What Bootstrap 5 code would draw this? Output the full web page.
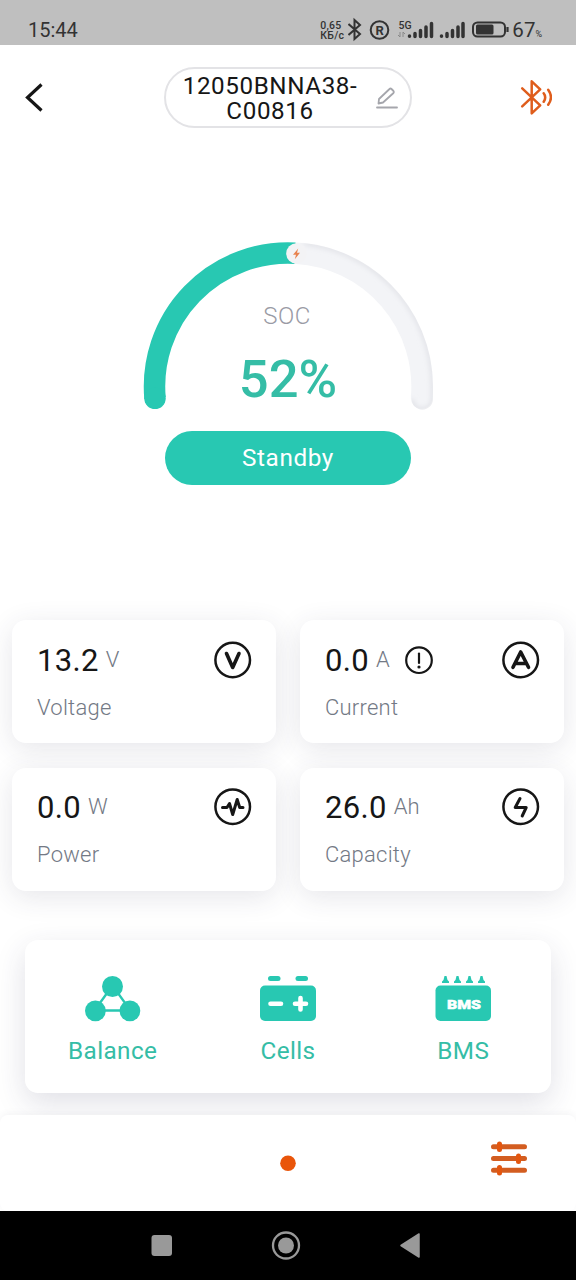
<!DOCTYPE html>
<html lang="en">
<head>
<meta charset="utf-8">
<meta name="viewport" content="width=device-width, initial-scale=1">
<title>Battery monitor</title>
<link href="https://cdn.jsdelivr.net/npm/bootstrap@5.3.0/dist/css/bootstrap.min.css" rel="stylesheet">
<style>
  :root { --teal: #28c8b2; --teal-text: #35bda6; --orange: #e3560f; --ink: #161616; }
  body { font-family: Roboto, sans-serif; color: var(--ink); background: #fff; letter-spacing: .5px; line-height: 1; }
  svg { display: block; flex: none; }
  .screen { width: 576px; height: 1280px; }
  .status { height: 45px; background: #bfbfbf; color: #333; padding: 15px 34px 0 28px; letter-spacing: 0; }
  .clock { font-size: 20px; line-height: 30px; letter-spacing: 0; }
  .rate { font-size: 10.5px; line-height: 10px; font-weight: 500; margin: 6px 5px 0 0; width: 23px; white-space: nowrap; letter-spacing: .2px; }
  .percent { font-size: 20.5px; line-height: 30px; margin-left: 2px; }
  .percent small { font-size: 9px; }
  .top { height: 105px; padding: 0 24px; }
  .device { width: 248px; height: 61px; border: 2px solid #e3e3e6; border-radius: 31px; padding: 0 12px 0 14px; }
  .device-name { font-size: 24.2px; line-height: 25px; width: 180px; margin-top: 2px; letter-spacing: .6px; }
  .gauge { height: 470px; padding-top: 80px; }
  .dial { width: 310px; height: 186px; }
  .dial-text { inset: 0; padding-top: 74px; }
  .soc { font-size: 24px; font-weight: 300; color: #9a9ba5; margin-right: 2px; }
  .level { font-size: 52.5px; font-weight: 500; color: var(--teal-text); margin-top: 25px; letter-spacing: 0; }
  .standby { width: 246px; height: 54px; margin-top: 15px; background: var(--teal); color: #fff; font-size: 24.3px; letter-spacing: .6px; }
  .stats { padding: 0 12px; row-gap: 24.5px; column-gap: 24px; display: grid; grid-template-columns: 1fr 1fr; }
  .stat { height: 123px; border-radius: 14px; background: #fff; padding: 21px 24px 0 25px; box-shadow: 0 6px 28px rgba(50,50,85,.12); }
  .stat-low { padding-top: 20.5px; }
  .stat-head { height: 38px; }
  .val { font-size: 31px; letter-spacing: .3px; }
  .unit { font-size: 22px; font-weight: 300; color: #737985; margin-left: 7px; letter-spacing: 0; }
  .stat-label { font-size: 22px; font-weight: 300; color: #737985; margin-top: 18px; letter-spacing: .25px; }
  .stat-low .stat-label { margin-top: 17.5px; }
  .tools { margin: 49.5px 25px 0; height: 153px; border-radius: 13px; background: #fff; padding-top: 36px; box-shadow: 0 10px 30px rgba(50,50,85,.15); }
  .tool { color: var(--teal-text); font-size: 24.3px; gap: 17px; width: 175.5px; letter-spacing: .4px; }
  .dock { position: relative; margin-top: 22px; height: 96px; background: #fff; border-radius: 8px; box-shadow: 0 -2px 6px rgba(50,50,85,.05); }
  .system { height: 69px; background: #000; position: relative; }
</style>
</head>
<body>
<main class="screen overflow-hidden d-flex flex-column">
  <header class="status d-flex justify-content-between">
    <span class="clock">15:44</span>
    <div class="d-flex">
      <div class="rate">0,65<br>КБ/с</div>
      <svg width="162" height="30" viewBox="347 15 162 30" fill="none" stroke="#333" stroke-width="2">
        <path d="M347.500 24L359 34L353.500 39V20L359 25L347.500 35"/>
        <circle cx="378.500" cy="30" r="8.800"/>
        <text x="378.600" y="34.600" text-anchor="middle" font-size="13" font-weight="700" fill="#333" stroke="none">R</text>
        <text x="397.500" y="28.500" font-size="10.500" font-weight="500" fill="#333" stroke="none">5G</text>
        <path d="M399 32v5m-2-2l2 2M402 37v-5l2 2" stroke="#888" stroke-width="1"/>
        <g stroke-width="3.500" stroke-linecap="round"><path d="M408.500 36v.2M414 33.500v3M419.500 30.500v6M425 27v9.500M430.500 23.500v13M440.500 36v.2M446 33.500v3M451.500 30.500v6M457 27v9.500M462 23.500v13"/></g>
        <rect x="472" y="22.500" width="32" height="14" rx="4.500"/>
        <rect x="475" y="24.500" width="17.500" height="10" rx="1.500" fill="#333" stroke="none"/>
        <path d="M506.500 27v5" stroke-width="2.200"/>
      </svg>
      <div class="percent text-nowrap">67<small>%</small></div>
    </div>
  </header>

  <nav class="top d-flex align-items-center justify-content-between">
    <svg width="32" height="32" viewBox="0 0 32 32" fill="none" stroke="#161616" stroke-width="3.200"><path d="M17.500 2.500L3.500 15.500L17.500 28.500"/></svg>
    <div class="device d-flex align-items-center justify-content-between">
      <div class="device-name text-center">12050BNNA38-<br>C00816</div>
      <svg width="22" height="24" viewBox="0 0 22 24" fill="none" stroke="#a5a6ac" stroke-width="1.800" stroke-linejoin="round" stroke-linecap="round"><path d="M2.500 17.500L3 13L13.500 3Q14.500 2 15.500 3L17.500 5Q18.300 6 17.500 7L7 16.500Z"/><path d="M1 21.500h20"/></svg>
    </div>
    <svg width="32" height="36" viewBox="520.300 79.700 32 36" fill="none" stroke="#df5d1c" stroke-width="2.500" stroke-linejoin="round" stroke-linecap="round"><path d="M522.500 88L540.500 105L532 113V81L540.500 89L522.500 106"/><path d="M544 93q3 4 0 8.500M548.500 89.500q5.500 7.500 0 15"/></svg>
  </nav>

  <section class="gauge d-flex flex-column align-items-center">
    <div class="dial position-relative">
      <svg width="310" height="186" viewBox="133 230 310 186" fill="none">
        <defs><filter id="soft" x="-10%" y="-10%" width="120%" height="120%"><feGaussianBlur stdDeviation="2.500"/></filter>
        <clipPath id="track"><path d="M144 403V386.500a144.500 144.500 0 0 1 289 0V399a10.700 10.700 0 0 1-21.400 0V386.500a123 123 0 0 0-246.100 0V403Z"/></clipPath></defs>
        <path d="M296.500 253.300A133.500 133.500 0 0 1 421.600 398" stroke="#f3f4f7" stroke-width="21.500" stroke-linecap="round"/>
        <g clip-path="url(#track)"><path d="M304 242.900A144.500 144.500 0 0 1 433 386.500V399a10.700 10.700 0 0 1-21.400 0" stroke="#e0e1e6" stroke-width="4" filter="url(#soft)"/></g>
        <path d="M155 398A133.500 133.500 0 0 1 295 253.200" stroke="#28c8b2" stroke-width="21.500"/>
        <circle cx="155" cy="398.300" r="10.750" fill="#28c8b2"/>
        <circle cx="296.500" cy="253.500" r="10.300" fill="#f3f3f5"/>
        <path d="M298.200 248.500L293 254.800H296L294.800 259.200L300 252.800H297Z" fill="#e8834f"/>
      </svg>
      <div class="dial-text position-absolute d-flex flex-column align-items-center">
        <div class="soc">SOC</div>
        <div class="level">52%</div>
      </div>
    </div>
    <div class="standby rounded-pill d-flex align-items-center justify-content-center">Standby</div>
  </section>

  <section class="stats">
    <div class="stat">
      <div class="stat-head d-flex align-items-center"><span class="val">13.2</span><span class="unit">V</span>
        <svg class="ms-auto" width="38" height="38" viewBox="0 0 38 38" fill="none" stroke="#161616" stroke-linecap="round" stroke-linejoin="round"><circle cx="18.700" cy="19" r="17.300" stroke-width="2.500"/><path d="M12.500 12.500L18.700 26.500L25 12.500" stroke-width="3.600"/></svg></div>
      <div class="stat-label">Voltage</div>
    </div>
    <div class="stat">
      <div class="stat-head d-flex align-items-center"><span class="val">0.0</span><span class="unit">A</span>
        <svg style="margin-left:15px" width="29" height="29" viewBox="0 0 29 29" fill="none" stroke="#161616" stroke-linecap="round"><circle cx="14" cy="14.200" r="12.800" stroke-width="2.200"/><path d="M14 7.500v9.500" stroke-width="2.200"/><circle cx="14" cy="21" r="1.600" fill="#161616" stroke="none"/></svg>
        <svg class="ms-auto" width="38" height="38" viewBox="0 0 38 38" fill="none" stroke="#161616" stroke-linecap="round" stroke-linejoin="round"><circle cx="18.700" cy="19" r="17.300" stroke-width="2.500"/><path d="M11 26.300L18.700 11L26.500 26.300M14 22.500h10" stroke-width="3.600"/></svg></div>
      <div class="stat-label">Current</div>
    </div>
    <div class="stat stat-low">
      <div class="stat-head d-flex align-items-center"><span class="val">0.0</span><span class="unit">W</span>
        <svg class="ms-auto" width="38" height="38" viewBox="0 0 38 38" fill="none" stroke="#161616" stroke-linecap="round" stroke-linejoin="round"><circle cx="18.700" cy="18.700" r="17.300" stroke-width="2.500"/><path d="M8.500 19.500H13L15.500 15.500L18.700 26.500L23.200 11.500L25.700 19.500H29" stroke-width="3"/></svg></div>
      <div class="stat-label">Power</div>
    </div>
    <div class="stat stat-low">
      <div class="stat-head d-flex align-items-center"><span class="val">26.0</span><span class="unit">Ah</span>
        <svg class="ms-auto" width="38" height="38" viewBox="0 0 38 38" fill="none" stroke="#161616" stroke-linecap="round" stroke-linejoin="round"><circle cx="18.700" cy="18.700" r="17.300" stroke-width="2.500"/><path d="M18 10.500L13.200 19.500H24.200L20.200 28" stroke-width="3"/></svg></div>
      <div class="stat-label">Capacity</div>
    </div>
  </section>

  <section class="tools d-flex">
    <div class="tool d-flex flex-column align-items-center">
      <svg width="56" height="46" viewBox="0.500 0.500 56 46" fill="#28c8b2"><path d="M28 10L10 35H46Z" fill="none" stroke="#28c8b2" stroke-width="2.400"/><circle cx="28" cy="11" r="10.500"/><circle cx="10.900" cy="35.300" r="10.400"/><circle cx="45.400" cy="35.300" r="10.400"/></svg>
      <span>Balance</span>
    </div>
    <div class="tool d-flex flex-column align-items-center">
      <svg width="56" height="46" viewBox="0 0.500 56 46" fill="#28c8b2"><rect x="8" y="0.500" width="12.500" height="5" rx="2.500"/><rect x="35.500" y="0.500" width="12.500" height="5" rx="2.500"/><rect y="10" width="56" height="35.500" rx="5"/><path d="M10.500 28.200H21M35 28.200H46M40.500 22.500V34" stroke="#fff" stroke-width="4.600" stroke-linecap="round"/></svg>
      <span>Cells</span>
    </div>
    <div class="tool d-flex flex-column align-items-center">
      <svg width="56" height="46" viewBox="-0.500 0.500 56 46" fill="#28c8b2"><path d="M9 0.500h2l1 4 1.500 1.500v1.500h-7V6L8 4.500ZM21 0.500h2l1 4 1.500 1.500v1.500h-7V6L20 4.500ZM33 0.500h2l1 4 1.500 1.500v1.500h-7V6L32 4.500ZM45 0.500h2l1 4 1.500 1.500v1.500h-7V6L44 4.500Z"/><rect y="10" width="55.500" height="35.500" rx="5"/><text x="28.500" y="33" text-anchor="middle" textLength="34" lengthAdjust="spacingAndGlyphs" font-size="13.500" font-weight="900" letter-spacing="0" fill="#fff" stroke="#fff" stroke-width=".5">BMS</text></svg>
      <span>BMS</span>
    </div>
  </section>

  <section class="dock">
    <svg width="576" height="96" viewBox="0 1115 576 96" fill="none" stroke="#e3560f" stroke-linecap="round"><circle cx="288" cy="1163.200" r="7.800" fill="#e9550a" stroke="none"/><path d="M493.500 1146.800H524.500M493.500 1158.500H524.500M493.500 1170.300H524.500" stroke="#d35d20" stroke-width="5"/><path d="M499.500 1144v5.500M518.500 1156v5.500M499.500 1167.500v5.500" stroke-width="5"/></svg>
  </section>
  <footer class="system">
    <svg width="576" height="69" viewBox="0 1211 576 69" fill="#999"><rect x="151.500" y="1235" width="20.500" height="21" rx="3"/><circle cx="286" cy="1245.500" r="13" fill="none" stroke="#999" stroke-width="2.300"/><circle cx="286" cy="1245.500" r="8"/><path d="M401 1245.500L419 1234V1257Z" stroke="#999" stroke-width="1.500" stroke-linejoin="round"/></svg>
  </footer>
</main>
<script src="https://cdn.jsdelivr.net/npm/bootstrap@5.3.0/dist/js/bootstrap.bundle.min.js"></script>
</body>
</html>
